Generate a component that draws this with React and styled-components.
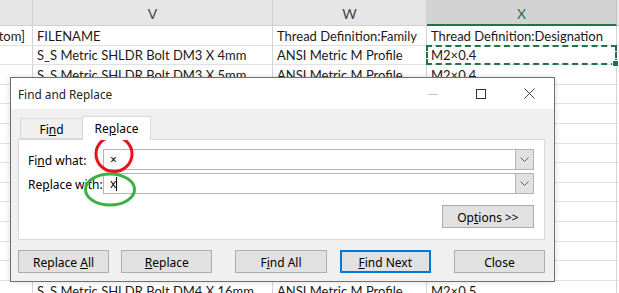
import React from 'react'
import styled, { createGlobalStyle } from 'styled-components'

const Global = createGlobalStyle`
  html, body { margin:0; padding:0; background:#fff; overflow:hidden; }
  body { width:619px; height:293px; }
`

const columns = [
  { key: 'U', width: 33 },
  { key: 'V', width: 240 },
  { key: 'W', width: 154 },
  { key: 'X', width: 190, selected: true },
  { key: 'Y', width: 40 },
]

const parts = [
  ['DM3', '4mm', 'M2×0.4'],
  ['DM3', '5mm', 'M2×0.4'],
  ['DM3', '6mm', 'M2×0.4'],
  ['DM3', '8mm', 'M2×0.4'],
  ['DM3', '10mm', 'M2×0.4'],
  ['DM3', '12mm', 'M2×0.4'],
  ['DM3', '16mm', 'M2×0.4'],
  ['DM4', '5mm', 'M2×0.5'],
  ['DM4', '6mm', 'M2×0.5'],
  ['DM4', '8mm', 'M2×0.5'],
  ['DM4', '10mm', 'M2×0.5'],
  ['DM4', '12mm', 'M2×0.5'],
  ['DM4', ' 16mm', 'M2×0.5'],
]

const rows = [
  ['tom]', 'FILENAME', 'Thread Definition:Family', 'Thread Definition:Designation', ''],
  ...parts.map(([d, l, t]) => ['', `S_S Metric SHLDR Bolt ${d} X ${l}`, 'ANSI Metric M Profile', t, '']),
]

function App() {
  return (
    <>
      <Global />
      <Page>
        <Sheet>
          <HeaderRow>
            {columns.map(c => (
              <ColHead key={c.key} $w={c.width} $selected={c.selected}>{c.key === 'U' ? '' : c.key}</ColHead>
            ))}
          </HeaderRow>
          {rows.map((r, i) => (
            <Row key={i}>
              {r.map((text, j) => (
                <Cell key={j} $w={columns[j].width} $right={j === 0} $active={i === 1 && j === 3}>
                  {text}
                </Cell>
              ))}
            </Row>
          ))}
        </Sheet>

        <Dialog>
          <TitleBar>
            <Title>Find and Replace</Title>
            <WinButtons>
              <WinBtn>
                <svg width="10" height="10" viewBox="0 0 10 10"><path d="M0 5.5h10" stroke="#c8c8c8" strokeWidth="1" /></svg>
              </WinBtn>
              <WinBtn>
                <svg width="10" height="10" viewBox="0 0 10 10"><rect x="0.5" y="0.5" width="9" height="9" fill="none" stroke="#333" strokeWidth="1" /></svg>
              </WinBtn>
              <WinBtn>
                <svg width="11" height="11" viewBox="0 0 11 11"><path d="M0.5 0.5l10 10M10.5 0.5l-10 10" stroke="#333" strokeWidth="0.9" /></svg>
              </WinBtn>
            </WinButtons>
          </TitleBar>
          <Body>
            <Tabs>
              <Tab><span>Fi<u>n</u>d</span></Tab>
              <Tab $active><span>Re<u>p</u>lace</span></Tab>
            </Tabs>
            <Panel>
              <Field>
                <Label>Fi<u>n</u>d what:</Label>
                <Combo>
                  <ComboText>×</ComboText>
                  <DropBtn><Chevron /></DropBtn>
                </Combo>
              </Field>
              <Field>
                <Label>Re<u>p</u>lace with:</Label>
                <Combo>
                  <ComboText>x<Caret /></ComboText>
                  <DropBtn><Chevron /></DropBtn>
                </Combo>
              </Field>
              <OptionsRow>
                <Button><span>Op<u>t</u>ions &gt;&gt;</span></Button>
              </OptionsRow>
            </Panel>
            <ButtonRow>
              <Button><span>Replace <u>A</u>ll</span></Button>
              <Button $gap={12}><span><u>R</u>eplace</span></Button>
              <Button $gap={23}><span>F<u>i</u>nd All</span></Button>
              <Button $gap={13} $default><span><u>F</u>ind Next</span></Button>
              <Button $gap={23}><span>Close</span></Button>
            </ButtonRow>
          </Body>
        </Dialog>

        <Marks width="619" height="293" viewBox="0 0 619 293">
          <ellipse cx="114" cy="154" rx="18" ry="17.5" fill="none" stroke="#e8141b" strokeWidth="3" />
          <ellipse cx="110" cy="189.5" rx="24.5" ry="15.5" fill="none" stroke="#3cb043" strokeWidth="3" />
        </Marks>
      </Page>
    </>
  )
}

function Chevron() {
  return (
    <svg width="9" height="5" viewBox="0 0 9 5">
      <path d="M0.5 0.5l4 4 4-4" fill="none" stroke="#606060" strokeWidth="1" />
    </svg>
  )
}

export default App

const Page = styled.div`
position:relative;
width:619px;
height:293px;
overflow:hidden;
`
const Sheet = styled.div`
display:flex;
flex-direction:column;
font-family:Lato, "Liberation Sans", sans-serif;
font-size:13px;
color:#1a1a1a;
`
const HeaderRow = styled.div`
display:flex;
height:26px;
background:#e6e6e6;
`
const ColHead = styled.div`
flex:0 0 ${p => p.$w}px;
box-sizing:border-box;
display:flex;
align-items:center;
justify-content:center;
padding-top:2px;
border-right:1px solid ${p => p.$selected ? '#c4c4c4' : '#d0d0d0'};
border-bottom:${p => p.$selected ? '2px solid #217346' : '1px solid #d0d0d0'};
background:${p => p.$selected ? '#d3d3d3' : '#e6e6e6'};
color:${p => p.$selected ? '#217346' : '#444'};
font-size:14px;
`
const Row = styled.div`
display:flex;
height:19.6px;
`
const Cell = styled.div`
flex:0 0 ${p => p.$w}px;
box-sizing:border-box;
position:relative;
display:flex;
align-items:center;
justify-content:${p => p.$right ? 'flex-end' : 'flex-start'};
padding:1px ${p => p.$right ? 7 : 4}px 0 4px;
border-right:1px solid #d4d4d4;
border-bottom:1px solid #e1e1e1;
white-space:nowrap;
overflow:hidden;
${p => p.$active && `
  overflow:visible;
  &::after{
    content:'';
    position:absolute;
    left:-1px; top:-1px; right:-1px; bottom:-1px;
    border:2px dashed #217346;
  }
  &::before{
    content:'';
    position:absolute;
    right:-3px; bottom:-3px;
    width:5px; height:5px;
    background:#217346;
    border:1px solid #fff;
    z-index:1;
  }
`}
`
const Dialog = styled.div`
position:absolute;
left:10px;
top:77px;
width:545px;
height:205px;
box-sizing:border-box;
border:1px solid #707070;
background:#f0f0f0;
box-shadow:0 0 6px rgba(0,0,0,0.15);
display:flex;
flex-direction:column;
font-family:"Noto Sans", "Open Sans", sans-serif;
font-size:12px;
color:#000;
`
const TitleBar = styled.div`
height:31px;
background:#fff;
display:flex;
align-items:center;
justify-content:space-between;
padding-left:7px;
`
const Title = styled.div`
font-size:11.8px;
color:#222;
`
const WinButtons = styled.div`
display:flex;
align-items:center;
padding-right:1px;
`
const WinBtn = styled.div`
width:48px;
height:31px;
display:flex;
align-items:center;
justify-content:center;
`
const Body = styled.div`
flex:1;
display:flex;
flex-direction:column;
padding:7px 9px 0 7px;
`
const Tabs = styled.div`
display:flex;
align-items:flex-end;
height:23px;
padding-left:2px;
position:relative;
z-index:1;
`
const Tab = styled.div`
box-sizing:border-box;
height:${p => p.$active ? 24 : 21}px;
width:${p => p.$active ? 69 : 63}px;
display:flex;
align-items:center;
justify-content:center;
background:${p => p.$active ? '#fff' : '#f0f0f0'};
border:1px solid #d9d9d9;
border-bottom:${p => p.$active ? 'none' : '1px solid #d9d9d9'};
margin-left:${p => p.$active ? -1 : 0}px;
margin-bottom:${p => p.$active ? -1 : 0}px;
padding-top:${p => p.$active ? 0 : 2}px;
`
const Panel = styled.div`
box-sizing:border-box;
height:101px;
background:#fff;
border:1px solid #d9d9d9;
padding:9px 10px 0 9px;
display:flex;
flex-direction:column;
gap:3px;
`
const Field = styled.div`
display:flex;
align-items:center;
`
const Label = styled.div`
width:75px;
flex:0 0 75px;
padding-top:2px;
`
const Combo = styled.div`
flex:1;
height:21px;
box-sizing:border-box;
border:1px solid #b4b4b4;
background:#fff;
display:flex;
`
const ComboText = styled.div`
flex:1;
display:flex;
align-items:center;
padding-left:6px;
font-size:12px;
`
const Caret = styled.span`
display:inline-block;
width:1px;
height:14px;
background:#000;
`
const DropBtn = styled.div`
width:17px;
background:#e1e1e1;
border-left:1px solid #b4b4b4;
display:flex;
align-items:center;
justify-content:center;
`
const OptionsRow = styled.div`
display:flex;
justify-content:flex-end;
margin-top:8px;
`
const Button = styled.div`
box-sizing:border-box;
width:92px;
height:23px;
margin-left:${p => p.$gap || 0}px;
display:flex;
align-items:center;
justify-content:center;
background:#e1e1e1;
border:${p => p.$default ? '2px solid #0078d7' : '1px solid #adadad'};
padding-top:1px;
`
const ButtonRow = styled.div`
display:flex;
margin-top:10px;
`
const Marks = styled.svg`
position:absolute;
left:0;
top:0;
pointer-events:none;
`
